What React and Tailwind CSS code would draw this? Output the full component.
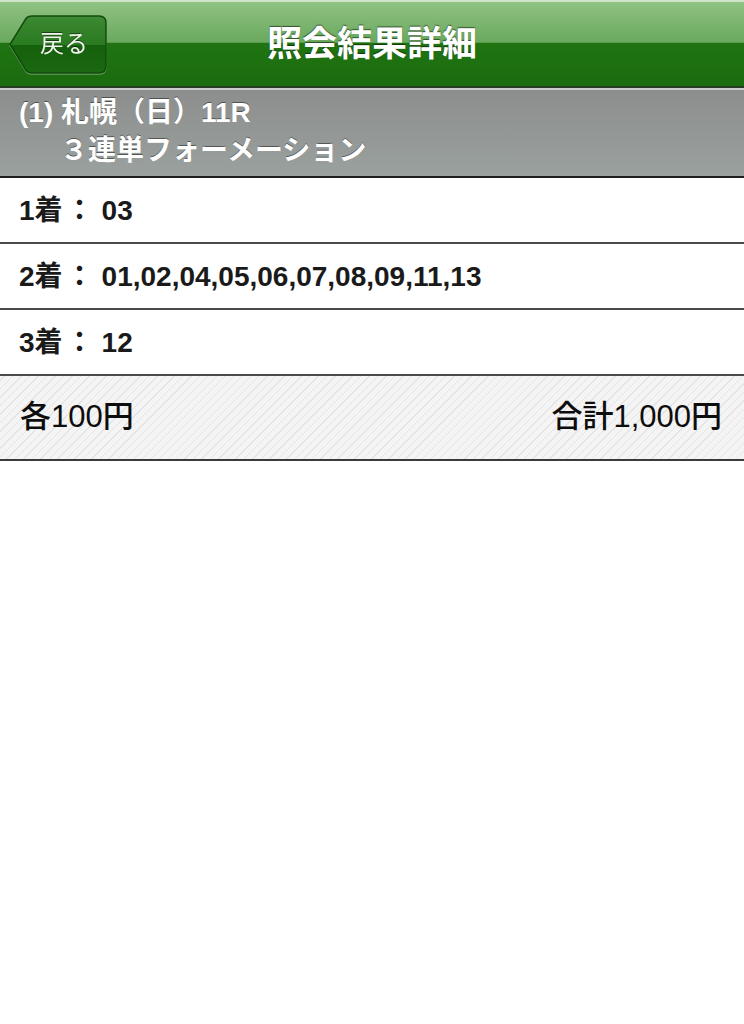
export default function App() {
  const font = { fontFamily: '"Liberation Sans", "Noto Sans CJK JP", sans-serif' };
  const rows = [
    ["1着", "03"],
    ["2着", "01,02,04,05,06,07,08,09,11,13"],
    ["3着", "12"],
  ];
  return (
    <div className="w-[744px] min-h-[1024px] bg-white" style={font}>
      {/* Nav bar */}
      <div className="relative h-[88px] border-t-2 border-[#cfe3c8] bg-[linear-gradient(to_bottom,#8fc283_0%,#6aa95e_48%,#207412_49%,#1b6b0f_100%)] border-b-2 border-b-[#263d22] flex items-center justify-center">
        <div className="absolute left-[9px] top-[13px] w-[98px] h-[59px] drop-shadow-[0_1px_0_rgba(255,255,255,0.35)]">
          <svg width="98" height="59" viewBox="0 0 98 59" className="absolute inset-0">
            <defs>
              <linearGradient id="bb" x1="0" y1="0" x2="0" y2="1">
                <stop offset="0" stopColor="#3c8a33" />
                <stop offset="0.5" stopColor="#2a7a20" />
                <stop offset="0.51" stopColor="#15600b" />
                <stop offset="1" stopColor="#1a6812" />
              </linearGradient>
            </defs>
            <path d="M1 29.5 L17 3.5 Q19 1 23 1 L90 1 Q97 1 97 8 L97 51 Q97 58 90 58 L23 58 Q19 58 17 55.5 Z" fill="url(#bb)" stroke="#124c0c" strokeWidth="1.5" />
          </svg>
          <span className="absolute left-[31px] top-[14px] text-[24px] text-[#eef5ea] leading-[30px] [text-shadow:0_-1px_0_rgba(0,0,0,0.5)]">戻る</span>
        </div>
        <h1 className="text-[35px] font-bold text-white leading-none [text-shadow:0_-1px_1px_rgba(0,0,0,0.55)] -mt-[2px]">照会結果詳細</h1>
      </div>
      <div className="h-[2px] bg-[#c9cdcb]" />
      {/* Gray section */}
      <div className="h-[88px] bg-[linear-gradient(to_bottom,#8c8e8d,#9aa19e)] border-b-2 border-[#1e1e1e] pl-[19px] pt-[4px] text-white font-bold [text-shadow:0_-1px_0_rgba(0,0,0,0.45)]">
        <div className="text-[28px] leading-[38px]">(1) 札幌（日）11R</div>
        <div className="text-[28px] leading-[38px] pl-[41px]">３連単フォーメーション</div>
      </div>
      {/* Rows */}
      {rows.map(([k, v]) => (
        <div key={k} className="h-[66px] border-b-2 border-[#4a4a4a] flex items-center pl-[19px] text-[28px] font-bold text-[#1a1a1a] pt-[2px]">
          <span>{k}</span>
          <span className="ml-[3px] w-[24px] text-center">：</span>
          <span className="ml-[12px]">{v}</span>
        </div>
      ))}
      {/* Footer */}
      <div className="h-[85px] border-b-2 border-[#3a3a3a] bg-[repeating-linear-gradient(-45deg,#f4f4f4_0px,#f4f4f4_5px,#e4e4e4_5px,#e4e4e4_6px)] flex items-center justify-between px-[20px] text-[31px] font-medium text-[#0d0d0d]">
        <span>各100円</span>
        <span className="mr-[2px]">合計1,000円</span>
      </div>
    </div>
  );
}
